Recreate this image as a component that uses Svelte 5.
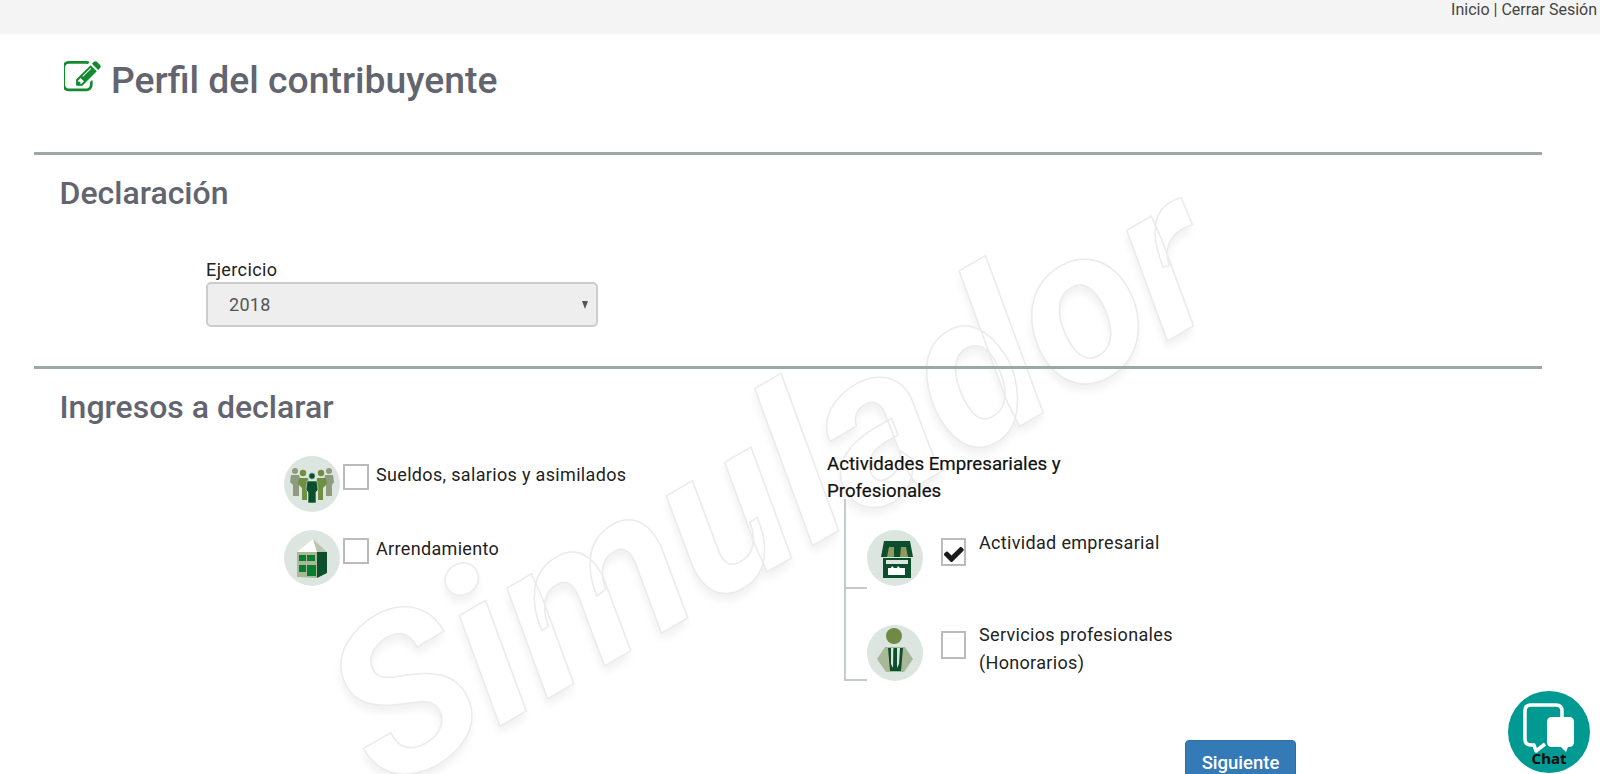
<script>
  const sueldos = 'Sueldos, salarios y asimilados';
</script>

<div class="page">
  <div class="watermark" aria-hidden="true">Simulador</div>

  <header class="topbar">Inicio | Cerrar Sesión</header>

  <main class="content">
    <div class="title">
      <svg class="edit" viewBox="128 128 1664 1536"><path d="M888 1184l116-116-152-152-116 116v56h96v96h56zm440-720q-16-16-33 1l-350 350q-17 17-1 33t33-1l350-350q17-17 1-33zm80 594v190q0 119-84.5 203.5t-203.5 84.5h-832q-119 0-203.5-84.5t-84.5-203.5v-832q0-119 84.5-203.5t203.5-84.5h832q63 0 117 25 15 7 18 23 3 17-9 29l-49 49q-14 14-32 8-23-6-45-6h-832q-66 0-113 47t-47 113v832q0 66 47 113t113 47h832q66 0 113-47t47-113v-126q0-13 9-22l64-64q15-15 35-7t20 29zm-96-738l288 288-672 672h-288v-288zm444 132l-92 92-288-288 92-92q28-28 68-28t68 28l152 152q28 28 28 68t-28 68z"/></svg>
      <h1>Perfil del contribuyente</h1>
    </div>

    <section class="declaracion">
      <h2>Declaración</h2>
      <div class="field">
        <span class="label">Ejercicio</span>
        <div class="select"><span>2018</span><i class="arrow"></i></div>
      </div>
    </section>

    <section class="ingresos">
      <h2>Ingresos a declarar</h2>
      <div class="columns">
        <div class="left">
          <div class="item">
            <svg class="circle" viewBox="0 0 56 56">
              <circle cx="28" cy="28" r="28" fill="#dde5e1"/>
              <g fill="#8f9b7e">
                <circle cx="11" cy="15" r="3"/><path d="M7 19h8l2 6-2 4v11h-6V29l-3-3z"/>
                <circle cx="45" cy="15" r="3"/><path d="M41 19h8l1 7-2 3v11h-6V29l-2-4z"/>
              </g>
              <g fill="#6f9040">
                <circle cx="19" cy="17" r="3.200"/><path d="M15 22h9l1 7-2 3v12h-5V32l-4-4z"/>
                <circle cx="37" cy="17" r="3.200"/><path d="M33 22h9l1 6-4 4v12h-5V32l-2-3z"/>
              </g>
              <circle cx="28" cy="20" r="3.200" fill="#0b4f2c" stroke="#dde5e1" stroke-width=".6"/>
              <path d="M23 25h10l1 9-2 2v11h-8V36l-2-2z" fill="#0b4f2c" stroke="#dde5e1" stroke-width=".6"/>
            </svg>
            <span class="box"></span>
            <span class="text">{sueldos}</span>
          </div>
          <div class="item second">
            <svg class="circle" viewBox="0 0 56 56">
              <circle cx="28" cy="28" r="28" fill="#dde5e1"/>
              <path d="M13 22h20v26l-20-1z" fill="#a9b897"/>
              <path d="M13 22 29 9l4 13z" fill="#fff"/>
              <path d="M29 9l14 13H33z" fill="#bcc3ae"/>
              <path d="M33 22h10v21l-10 5z" fill="#0b4f2c"/>
              <g fill="#0a7d30">
                <rect x="15" y="25" width="7" height="6"/><rect x="23" y="25" width="8" height="6"/>
                <rect x="15" y="35" width="7" height="7"/><rect x="23" y="35" width="9" height="11"/>
              </g>
            </svg>
            <span class="box"></span>
            <span class="text">Arrendamiento</span>
          </div>
        </div>

        <div class="right">
          <div class="group-title">Actividades Empresariales y Profesionales</div>
          <div class="tree">
            <div class="branch first">
              <svg class="circle" viewBox="0 0 56 56">
                <circle cx="28" cy="28" r="28" fill="#dde5e1"/>
                <path d="M17 11h26l3 16H14z" fill="#0b4f2c"/>
                <path d="M22 17h5v10h-7zM34 17h5l2 10h-8z" fill="#8f9b5e"/>
                <path d="M16 28h28v20H16z" fill="#0b4f2c"/>
                <path d="M19 30h22v4H19z" fill="#dde5e1"/>
                <path d="M21 38h3l1-2 2 2h3l1-2 2 2h5v7H21z" fill="#fff"/>
              </svg>
              <span class="box checked">
                <svg viewBox="128 256 1560 1200"><path d="M1671 566q0 40-28 68l-724 724-136 136q-28 28-68 28t-68-28l-136-136-362-362q-28-28-28-68t28-68l136-136q28-28 68-28t68 28l294 295 656-657q28-28 68-28t68 28l136 136q28 28 28 68z"/></svg>
              </span>
              <span class="text">Actividad empresarial</span>
            </div>
            <div class="branch">
              <svg class="circle" viewBox="0 0 56 56">
                <circle cx="28" cy="28" r="28" fill="#dde5e1"/>
                <circle cx="27" cy="11" r="8" fill="#6f8a45"/>
                <path d="M18 22 10 34l9 13h18l9-13-8-12z" fill="#a9b897"/>
                <path d="M21 23h15l-2 23h-11z" fill="#0b4f2c"/>
                <path d="M24 23h2.500l-.5 20-2-4zM30 23h3l-1 16-2 4z" fill="#dde5e1"/>
                <path d="M27 23h2l.5 4-.5 12-1 2-1-2-.5-12z" fill="#0b4f2c"/>
              </svg>
              <span class="box"></span>
              <span class="text">Servicios profesionales<br />(Honorarios)</span>
            </div>
          </div>
        </div>
      </div>
      <div class="actions"><button type="button">Siguiente</button></div>
    </section>
  </main>

  <div class="chat" aria-label="Chat">
    <svg viewBox="0 0 82 82">
      <circle cx="41" cy="41" r="41" fill="#009a93"/>
      <path d="M37 53 28 60l-2-6h-3q-6 0-6-6V20q0-6 6-6h25q6 0 6 6v7" fill="none" stroke="#fff" stroke-width="3.500" stroke-linejoin="round"/>
      <path d="M44 26h17q5 0 5 5v20q0 5-5 5h-1l-2 5-5-5H44q-5 0-5-5V31q0-5 5-5z" fill="#fff"/>
    </svg>
    <span>Chat</span>
  </div>
</div>

<style>
  :global(html), :global(body) {
    margin: 0;
    height: 100%;
    overflow: hidden;
    background: #fff;
  }
  .page {
    position: relative;
    height: 774px;
    overflow: hidden;
    font-family: Roboto, "Liberation Sans", sans-serif;
    color: #222;
  }
  .watermark {
    position: absolute;
    left: 347px;
    top: 618px;
    font-size: 220px;
    line-height: 1;
    font-weight: 700;
    font-style: italic;
    color: #fff;
    -webkit-text-stroke: 1.5px #ebebeb;
    text-shadow: -4px 6px 9px rgba(0, 0, 0, 0.06);
    transform: rotate(-30deg);
    transform-origin: 0 50%;
    white-space: nowrap;
  }
  .topbar {
    position: relative;
    height: 34px;
    background: #f4f4f4;
    text-align: right;
    padding-right: 3px;
    font-size: 16px;
    line-height: 20px;
    color: #444;
  }
  .content {
    position: relative;
    margin-left: 34px;
    width: 1508px;
  }
  .title {
    display: flex;
    align-items: center;
    gap: 9px;
    height: 64px;
    padding: 13px 0 0 30px;
    margin-bottom: 41px;
  }
  .edit {
    width: 38px;
    height: 33px;
    fill: #128a2f;
    margin-top: -4px;
  }
  h1 {
    margin: 2px 0 0;
    font-size: 37.3px;
    font-weight: 500;
    color: #62646f;
    line-height: 44px;
  }
  section {
    border-top: 3px solid #9aa8a6;
  }
  h2 {
    margin: 0;
    padding-left: 25.5px;
    font-size: 32px;
    font-weight: 500;
    line-height: 38px;
    color: #62646f;
  }
  .declaracion {
    height: 214px;
    padding-top: 19px;
    box-sizing: border-box;
  }
  .field {
    margin: 48px 0 0 172px;
    width: 392px;
  }
  .label {
    display: block;
    font-size: 18px;
    line-height: 20px;
    letter-spacing: 0.4px;
  }
  .select {
    display: flex;
    align-items: center;
    justify-content: space-between;
    box-sizing: border-box;
    height: 45px;
    margin-top: 2px;
    padding: 0 8px 0 21px;
    background: #eee;
    border: 2px solid #ccc;
    border-radius: 5px;
    font-size: 18px;
    color: #555;
    letter-spacing: 0.3px;
  }
  .arrow {
    width: 0;
    height: 0;
    border-left: 3.5px solid transparent;
    border-right: 3.5px solid transparent;
    border-top: 8px solid #555;
  }
  .ingresos {
    padding-top: 19px;
  }
  .columns {
    display: flex;
    margin-top: 30px;
    padding-left: 250px;
  }
  .left {
    width: 543px;
    flex: none;
  }
  .item {
    display: flex;
    align-items: flex-start;
    gap: 3px;
    height: 56px;
  }
  .item.second {
    margin-top: 18px;
  }
  .circle {
    width: 56px;
    height: 56px;
    flex: none;
  }
  .box {
    display: block;
    flex: none;
    box-sizing: border-box;
    width: 26px;
    height: 26px;
    background: #fff;
    border: 2px solid #bbb;
    margin-top: 8px;
  }
  .text {
    font-size: 18px;
    line-height: 28px;
    letter-spacing: 0.33px;
    color: #222;
    padding-left: 4px;
    margin-top: 5px;
  }
  .right {
    width: 360px;
  }
  .group-title {
    width: 260px;
    font-size: 18.7px;
    font-weight: 400;
    line-height: 26.5px;
    color: #111;
    margin-top: -5px;
    -webkit-text-stroke: 0.2px #111;
  }
  .tree {
    margin-left: 17px;
    margin-top: -5px;
    width: 340px;
  }
  .branch {
    position: relative;
    display: flex;
    align-items: flex-start;
    height: 92px;
    margin-left: 23px;
    box-sizing: border-box;
  }
  .branch.first {
    height: 90px;
    padding-top: 31px;
  }
  .branch:not(.first) {
    padding-top: 36px;
  }
  .branch::before {
    content: '';
    position: absolute;
    left: -23px;
    top: 0;
    bottom: 0;
    width: 23px;
    border-left: 2px solid #c5cbcb;
    border-bottom: 2px solid #c5cbcb;
    box-sizing: border-box;
  }
  .branch .box {
    margin: 8px 13px 0 18px;
    width: 25px;
    height: 28px;
  }
  .branch:not(.first) .box {
    margin-top: 6px;
  }
  .branch .text {
    padding-left: 0;
    margin-top: -1px;
  }
  .branch:not(.first) .text {
    margin-top: -4px;
  }
  .checked {
    display: flex;
    align-items: center;
    justify-content: center;
  }
  .checked svg {
    width: 20px;
    height: 17px;
    fill: #1a1a1a;
    margin-top: 3px;
  }
  .actions {
    margin-top: 59px;
    padding-left: 1151px;
  }
  button {
    box-sizing: border-box;
    width: 111px;
    height: 46px;
    background: #337ab7;
    border: 1px solid #2e6da4;
    border-radius: 4px;
    color: #fff;
    font: 500 18.5px Roboto, "Liberation Sans", sans-serif;
    padding: 0 0 1px;
  }
  .chat {
    position: absolute;
    left: 1508px;
    top: 691px;
    width: 82px;
    height: 82px;
  }
  .chat svg {
    display: block;
    width: 82px;
    height: 82px;
  }
  .chat span {
    position: absolute;
    left: 0;
    right: 0;
    bottom: 7px;
    text-align: center;
    font: 700 15px "Noto Sans", "DejaVu Sans", sans-serif;
    line-height: 16px;
    color: #0b0b0b;
  }
</style>
